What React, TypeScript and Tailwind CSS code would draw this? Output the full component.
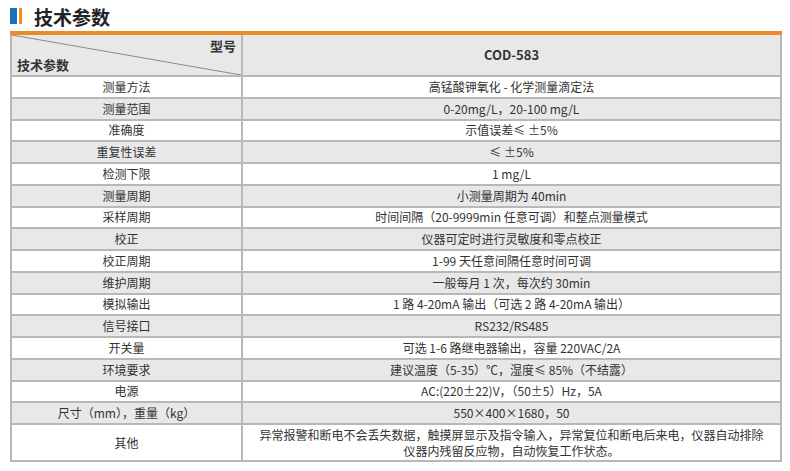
import React from "react";

const rows: [string, string][] = [
  ["测量方法", "高锰酸钾氧化 - 化学测量滴定法"],
  ["测量范围", "0-20mg/L，20-100 mg/L"],
  ["准确度", "示值误差≤ ±5%"],
  ["重复性误差", "≤ ±5%"],
  ["检测下限", "1 mg/L"],
  ["测量周期", "小测量周期为 40min"],
  ["采样周期", "时间间隔（20-9999min 任意可调）和整点测量模式"],
  ["校正", "仪器可定时进行灵敏度和零点校正"],
  ["校正周期", "1-99 天任意间隔任意时间可调"],
  ["维护周期", "一般每月 1 次，每次约 30min"],
  ["模拟输出", "1 路 4-20mA 输出（可选 2 路 4-20mA 输出）"],
  ["信号接口", "RS232/RS485"],
  ["开关量", "可选 1-6 路继电器输出，容量 220VAC/2A"],
  ["环境要求", "建议温度（5-35）℃，湿度≤ 85%（不结露）"],
  ["电源", "AC:(220±22)V，（50±5）Hz，5A"],
  ["尺寸（mm），重量（kg）", "550×400×1680，50"],
];

export default function App() {
  return (
    <div
      className="w-[790px] h-[471px] bg-white text-[#333] overflow-hidden"
      style={{ fontFamily: '"Noto Sans CJK SC", "Noto Sans", sans-serif' }}
    >
      <div className="flex items-center h-[31px] pl-[10px] pt-[1px]">
        <div className="w-[7px] h-[16px] bg-[#1f6fc0]" />
        <div className="w-[3px] h-[16px] bg-[#f08a24] ml-[2px]" />
        <div className="ml-[12px] text-[19px] font-bold leading-none text-[#222]">技术参数</div>
      </div>
      <div className="mx-[10px] w-[772px] h-[4px] bg-[#ef8a2a]" />
      <div className="ml-[10px] w-[772px] border-l-2 border-[#b8b8b8] grid grid-cols-[231px_1fr] text-[12px]">
        <div className="relative h-[42px] bg-[#e8e8e9] border-r-2 border-b-2 border-[#b8b8b8]">
          <svg className="absolute inset-0" width="229" height="40" viewBox="0 0 229 40">
            <line x1="0" y1="0" x2="229" y2="40" stroke="#8a8a8a" strokeWidth="1" />
          </svg>
          <div className="absolute right-[5px] top-[4px] font-bold text-[13px] leading-none">型号</div>
          <div className="absolute left-[5px] top-[23px] font-bold text-[13px] leading-none">技术参数</div>
        </div>
        <div className="h-[42px] bg-[#e8e8e9] border-r-2 border-b-2 border-[#b8b8b8] flex items-center justify-center font-bold text-[13px]">
          COD-583
        </div>
        {rows.map(([k, v], i) => {
          const bg = i % 2 === 0 ? "bg-white" : "bg-[#e8e8e9]";
          return (
            <React.Fragment key={k}>
              <div className={`${bg} h-[21.75px] border-r-2 border-b-2 border-[#b8b8b8] flex items-center justify-center leading-none`}>
                {k}
              </div>
              <div className={`${bg} h-[21.75px] border-r-2 border-b-2 border-[#b8b8b8] flex items-center justify-center leading-none`}>
                {v}
              </div>
            </React.Fragment>
          );
        })}
        <div className="bg-white h-[37px] border-r-2 border-b-2 border-[#b8b8b8] flex items-center justify-center">
          其他
        </div>
        <div className="bg-white h-[37px] border-r-2 border-b-2 border-[#b8b8b8] flex flex-col items-center justify-center leading-[16px]">
          <div>异常报警和断电不会丢失数据，触摸屏显示及指令输入，异常复位和断电后来电，仪器自动排除</div>
          <div>仪器内残留反应物，自动恢复工作状态。</div>
        </div>
      </div>
    </div>
  );
}
